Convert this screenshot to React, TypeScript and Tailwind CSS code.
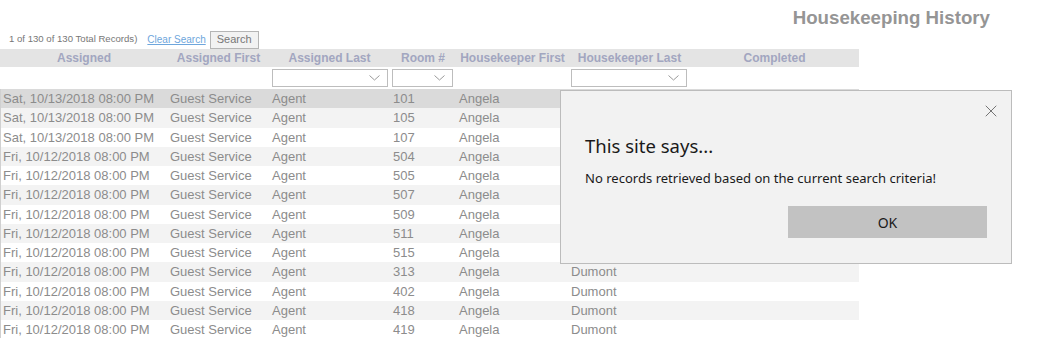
import { X } from "lucide-react";

const rows = [
  { day: "Sat, 10/13/2018 08:00 PM", room: "101", last: "" },
  { day: "Sat, 10/13/2018 08:00 PM", room: "105", last: "" },
  { day: "Sat, 10/13/2018 08:00 PM", room: "107", last: "" },
  { day: "Fri, 10/12/2018 08:00 PM", room: "504", last: "" },
  { day: "Fri, 10/12/2018 08:00 PM", room: "505", last: "" },
  { day: "Fri, 10/12/2018 08:00 PM", room: "507", last: "" },
  { day: "Fri, 10/12/2018 08:00 PM", room: "509", last: "" },
  { day: "Fri, 10/12/2018 08:00 PM", room: "511", last: "" },
  { day: "Fri, 10/12/2018 08:00 PM", room: "515", last: "" },
  { day: "Fri, 10/12/2018 08:00 PM", room: "313", last: "Dumont" },
  { day: "Fri, 10/12/2018 08:00 PM", room: "402", last: "Dumont" },
  { day: "Fri, 10/12/2018 08:00 PM", room: "418", last: "Dumont" },
  { day: "Fri, 10/12/2018 08:00 PM", room: "419", last: "Dumont" },
];

const headers = [
  "Assigned",
  "Assigned First",
  "Assigned Last",
  "Room #",
  "Housekeeper First",
  "Housekeeper Last",
  "Completed",
];

const cols = "grid grid-cols-[168px_101px_121px_66px_113px_121px_169px]";

const Chevron = () => (
  <svg width="11" height="6" viewBox="0 0 11 6" className="shrink-0">
    <path d="M0.5 0.5 L5.5 5 L10.5 0.5" fill="none" stroke="#9a9a9a" strokeWidth="1" />
  </svg>
);

const FilterSelect = ({ width }: { width: string }) => (
  <div
    className={`${width} h-[18px] border border-[#bdbdbd] bg-white flex items-center justify-end pr-[7px]`}
  >
    <Chevron />
  </div>
);

export default function App() {
  return (
    <div
      className="relative w-[1059px] h-[338px] overflow-hidden bg-white"
      style={{ fontFamily: '"Liberation Sans", Arial, sans-serif' }}
    >
      {/* title */}
      <div className="h-[30px] flex justify-end pr-[69px] pt-[7px]">
        <div className="text-[18.7px] font-bold leading-[22px] text-[#959595]">
          Housekeeping History
        </div>
      </div>

      {/* search info */}
      <div className="h-[19px] flex items-center pl-[9px]">
        <span className="text-[9.6px] text-[#777]">1 of 130 of 130 Total Records)</span>
        <span className="ml-[10px] text-[10px] text-[#6ea6dc] underline">Clear Search</span>
        <div className="ml-[4px] w-[49px] h-[18px] border border-[#b5b5b5] bg-[#f2f2f2] flex items-center justify-center text-[11px] text-[#777]">
          Search
        </div>
      </div>

      {/* table */}
      <div className="w-[859px]">
        <div className={`${cols} h-[18px] bg-[#e4e4e4] items-center`}>
          {headers.map((h) => (
            <div key={h} className="text-center text-[12px] font-bold text-[#a2a6c0] whitespace-nowrap">
              {h}
            </div>
          ))}
        </div>

        <div className={`${cols} h-[22px] items-center`}>
          <div />
          <div />
          <div className="pl-[3px]">
            <FilterSelect width="w-[116px]" />
          </div>
          <div className="pl-[2px]">
            <FilterSelect width="w-[61px]" />
          </div>
          <div />
          <div className="pl-[2px]">
            <FilterSelect width="w-[116px]" />
          </div>
          <div />
        </div>

        {rows.map((r, i) => (
          <div
            key={r.room}
            className={`${cols} h-[19.25px] items-center text-[13px] text-[#8c8c8c] whitespace-nowrap border-l border-[#d0d0d0] ${
              i === 0 ? "bg-[#dadada]" : i % 2 === 1 ? "bg-[#f3f3f3]" : "bg-white"
            }`}
          >
            <div className="pl-[2px]">{r.day}</div>
            <div className="pl-[1px]">Guest Service</div>
            <div className="pl-[2px]">Agent</div>
            <div className="pl-[2px]">{r.room}</div>
            <div className="pl-[2px]">Angela</div>
            <div className="pl-[1px]">{r.last}</div>
            <div />
          </div>
        ))}
      </div>

      {/* alert dialog */}
      <div
        className="absolute left-[560px] top-[90px] w-[452px] h-[174px] bg-[#f2f2f2] border border-[#bcbcbc] flex flex-col"
        style={{ fontFamily: '"Noto Sans", "Open Sans", sans-serif' }}
      >
        <div className="absolute right-[10px] top-[10px] text-[#333]">
          <X size={20} strokeWidth={0.8} />
        </div>
        <div className="pl-[24px] pt-[42px] text-[18.5px] leading-[26px] text-[#1a1a1a]">
          This site says...
        </div>
        <div className="pl-[24px] pt-[10px] text-[13.05px] leading-[18px] text-[#1a1a1a]">
          No records retrieved based on the current search criteria!
        </div>
        <div className="flex justify-end pr-[24px] mt-[19px]">
          <div className="w-[199px] h-[32px] bg-[#c2c2c2] flex items-center justify-center text-[14px] text-[#1a1a1a]">
            OK
          </div>
        </div>
      </div>
    </div>
  );
}
